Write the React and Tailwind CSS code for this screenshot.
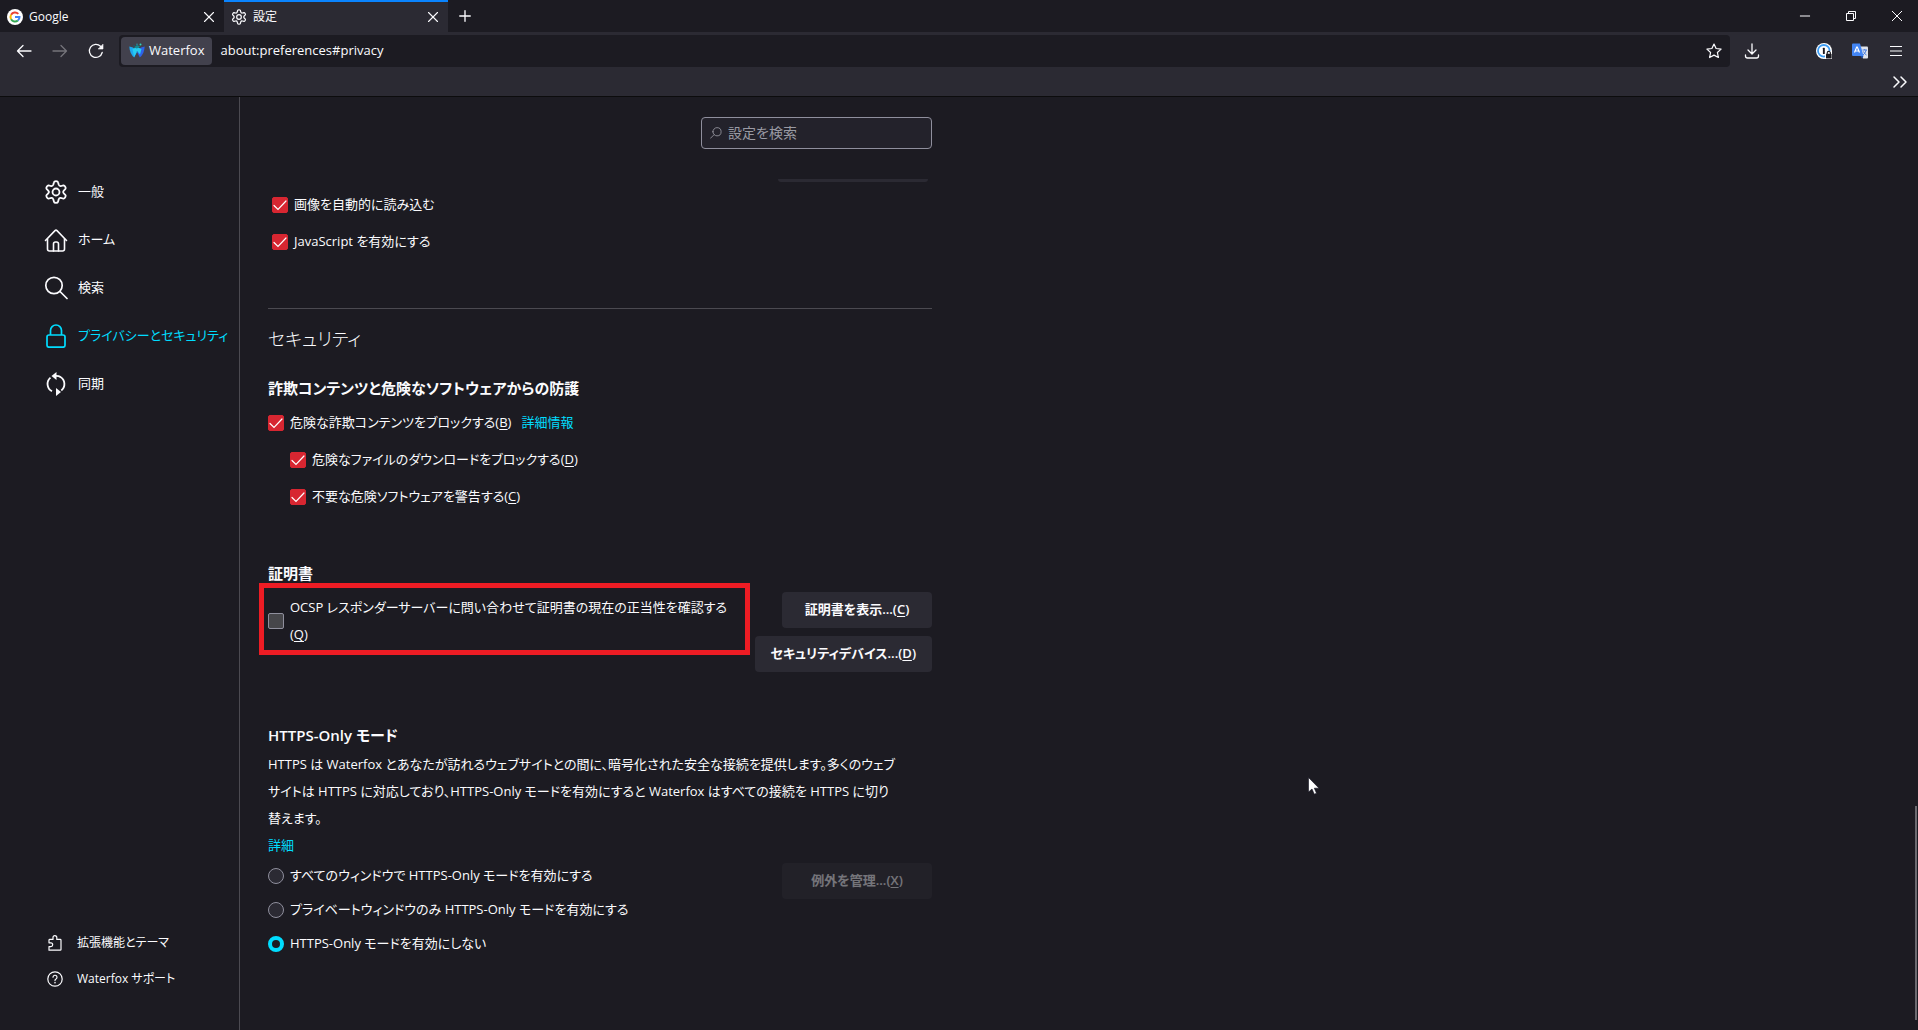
import React, { useState } from 'react';
import { ChevronsRight, Minus, Plus, X } from 'lucide-react';

function GearIcon({ className, strokeWidth = 1.500 }) {
  return (
    <svg viewBox="2 .7 20 20" className={className} fill="none" stroke="currentColor" strokeWidth={strokeWidth}>
      <path d="M10.300 2.600c.3-1.300 3.100-1.300 3.400 0l.5 1.900c.3.9 1.200 1.400 2.100 1.200l1.900-.5c1-.2 2.400 2.200 1.700 2.900l-1.400 1.400c-.7.7-.7 1.700 0 2.400l1.400 1.400c.7.7-.7 3.100-1.700 2.900l-1.900-.5c-.9-.2-1.800.3-2.100 1.200l-.5 1.900c-.3 1.300-3.100 1.300-3.400 0l-.5-1.900c-.3-.9-1.200-1.400-2.100-1.200l-1.900.5c-1 .2-2.400-2.200-1.700-2.900l1.400-1.400c.7-.7.7-1.700 0-2.400L4.100 8.100C3.400 7.400 4.800 5 5.800 5.200l1.900.5c.9.2 1.800-.3 2.100-1.200z" />
      <circle cx="12" cy="10.700" r="2.900" />
    </svg>
  );
}

function HomeIcon({ className }) {
  return (
    <svg viewBox="0 0 24 24" className={className} fill="none" stroke="currentColor" strokeWidth="1.600" strokeLinejoin="round" strokeLinecap="round">
      <path d="M1.500 12.500 11 2.600q1-1 2 0l9.500 9.900" />
      <path d="M3.500 11v10q0 2 2 2h13q2 0 2-2V11" />
      <path d="M9.500 23v-7q0-2 2-2h1q2 0 2 2v7" />
    </svg>
  );
}

function SearchIcon({ className }) {
  return (
    <svg viewBox="0 0 24 24" className={className} fill="none" stroke="currentColor" strokeWidth="1.700" strokeLinecap="round">
      <circle cx="10" cy="9.500" r="8.200" />
      <path d="m16 15.500 7 7" />
    </svg>
  );
}

function LockIcon({ className }) {
  return (
    <svg viewBox="0 0 24 24" className={className} fill="none" stroke="currentColor" strokeWidth="1.700">
      <rect x="3" y="11" width="18" height="12.200" rx="2" />
      <path d="M6.500 11V6.500a5.500 5.500 0 0 1 11 0V11" />
    </svg>
  );
}

function SyncIcon({ className }) {
  return (
    <svg viewBox="0 0 24 24" className={className} fill="none" stroke="currentColor" strokeWidth="1.800">
      <path d="M8 19.300A8.300 8.300 0 0 1 6.500 5.600" />
      <path d="M12 3.800q3 0 4.500 1.200a8.300 8.300 0 0 1 .8 13.500" />
      <path d="M12.500 0v8L7.500 4zM12 16v8l5-4z" fill="currentColor" stroke="none" />
    </svg>
  );
}

function PuzzleIcon({ className }) {
  return (
    <svg viewBox="0 0 16 16" className={className} fill="none" stroke="currentColor" strokeWidth="1.200" strokeLinejoin="round">
      <path d="M2 15.200h11.200q.8 0 .8-.8V5.200q0-.8-.8-.8H9.800V2.600a1.900 1.900 0 0 0-3.800 0v1.800H2.800q-.8 0-.8.8v2.600h1.800a1.900 1.900 0 0 1 0 3.800H2z" />
    </svg>
  );
}

function HelpIcon({ className }) {
  return (
    <svg viewBox="0 0 16 16" className={className} fill="none" stroke="currentColor" strokeWidth="1.200" strokeLinecap="round">
      <circle cx="8" cy="8" r="7.200" />
      <path d="M6 6.200a2 2 0 1 1 3 1.800q-1 .5-1 1.400" />
      <circle cx="8" cy="11.600" r=".3" />
    </svg>
  );
}

function GoogleLogo({ className }) {
  return (
    <svg viewBox="0 0 16 16" className={className} fill="none" strokeWidth="2">
      <circle cx="8" cy="8" r="8" fill="#fff" />
      <path d="M4.100 5.700A4.500 4.500 0 0 1 11.300 4.900" stroke="#ea4335" />
      <path d="M4.100 5.700a4.500 4.500 0 0 0 0 4.600" stroke="#fbbc05" />
      <path d="M4.100 10.300a4.500 4.500 0 0 0 6.800 1.200" stroke="#34a853" />
      <path d="M10.900 11.500A4.500 4.500 0 0 0 12.500 8H8" stroke="#4285f4" />
    </svg>
  );
}

function WaterfoxLogo({ className }) {
  return (
    <svg viewBox="0 0 16 16" className={className}>
      <path d="M.3 3.500 4 4.500 8 9l-2.800 5.500Q.8 11 .3 3.500z" fill="#1ea7f0" />
      <path d="M15.700 3.500 12 4.500 8 9l2.800 5.500q4.400-3.500 4.900-11z" fill="#2f62e8" />
      <path d="M3.500 6 8 4l4.500 2-1.500 5.500-3-3.500-2.800 6z" fill="#27cdf2" />
      <path d="M5 4.500 8 2l3 1.500-3 2z" fill="#128a94" />
      <circle cx="11.500" cy="1.500" r="1" fill="#2dd4bf" />
      <circle cx="8" cy="1.200" r=".7" fill="#22a6b3" />
      <circle cx="5" cy="2.700" r=".8" fill="#155e75" />
    </svg>
  );
}

function PasswordIcon({ className }) {
  return (
    <svg viewBox="0 0 16 16" className={className}>
      <circle cx="8" cy="8" r="8" fill="#fff" />
      <circle cx="7.800" cy="7.800" r="5.800" fill="#fff" stroke="#3d9df5" strokeWidth="1.800" />
      <rect x="6.900" y="4.700" width="1.900" height="6.300" rx=".6" fill="#1c1b22" />
      <path d="M9 8h7v8H9z" fill="#fff" />
      <rect x="10" y="10.800" width="5.600" height="4.700" rx=".6" fill="#1c1b22" />
      <path d="M11.200 11v-1a1.600 1.600 0 0 1 3.200 0v1" fill="none" stroke="#1c1b22" strokeWidth="1.100" />
    </svg>
  );
}

function TranslateIcon({ className }) {
  return (
    <svg viewBox="0 0 16 16" className={className}>
      <path d="M7 3.500h8q1 0 1 1v10q0 1-1 1H11z" fill="#dfe3ea" />
      <path d="M10.500 7H15M12.700 6v1M14.200 7q-.5 3-3.200 5M11.500 8.500q1 2.500 3 3.500" stroke="#4a7fe0" fill="none" />
      <path d="M1 .5h7L11.500 13H1q-1 0-1-1V1.500q0-1 1-1z" fill="#4285f4" />
      <path d="M8.500 13h3L10 15.500z" fill="#1b4fae" />
      <path d="M2.500 9.500 4.700 4h.6l2.200 5.500M3.300 8h3.400" stroke="#fff" strokeWidth="1.200" fill="none" />
    </svg>
  );
}

const categories = [
  { name: '一般', Icon: GearIcon },
  { name: 'ホーム', Icon: HomeIcon },
  { name: '検索', Icon: SearchIcon },
  { name: 'プライバシーとセキュリティ', Icon: LockIcon, active: true },
  { name: '同期', Icon: SyncIcon },
];

const httpsModes = [
  { id: 'all', label: 'すべてのウィンドウで HTTPS-Only モードを有効にする' },
  { id: 'private', label: 'プライベートウィンドウのみ HTTPS-Only モードを有効にする' },
  { id: 'off', label: 'HTTPS-Only モードを有効にしない' },
];

function Tab({ icon, title, active }) {
  return (
    <div
      className={`flex w-56 items-center border-t-2 pr-[6px] pl-[7px] text-xs ${
        active ? 'border-[#0a84ff] bg-[#2b2a33]' : 'border-transparent'
      }`}
    >
      {icon}
      <span className="ml-[6px] flex-1 whitespace-nowrap">{title}</span>
      <button aria-label="タブを閉じる">
        <X className="size-[18px]" strokeWidth={1.500} />
      </button>
    </div>
  );
}

function TitleBar() {
  return (
    <div className="flex h-8">
      <Tab icon={<GoogleLogo className="size-4" />} title="Google" />
      <Tab icon={<GearIcon className="size-4" strokeWidth={1.500} />} title="設定" active />
      <button className="ml-1 px-1" aria-label="新しいタブ">
        <Plus className="size-[18px]" strokeWidth={1.800} />
      </button>
      <div className="ml-auto flex gap-1">
        <button className="flex w-[42px] items-center justify-center" aria-label="最小化">
          <Minus className="size-4" strokeWidth={1.500} />
        </button>
        <button className="flex w-[42px] items-center justify-center" aria-label="元に戻す">
          <svg viewBox="0 0 10 10" className="size-[10px]" fill="none" stroke="currentColor">
            <path d="M.5 2.500h7v7h-7zM2.500 2.500v-2h7v7h-2" />
          </svg>
        </button>
        <button className="flex w-[42px] items-center justify-center" aria-label="閉じる">
          <svg viewBox="0 0 10 10" className="size-[10px]" stroke="currentColor">
            <path d="m0 0 10 10M10 0 0 10" />
          </svg>
        </button>
      </div>
    </div>
  );
}

function NavBar() {
  return (
    <div className="flex h-9 items-center pt-px">
      <div className="flex items-center gap-5 pr-[15px] pl-4">
        <button aria-label="戻る">
          <svg viewBox="0 0 16 16" className="size-4" fill="none" stroke="currentColor" strokeWidth="1.300" strokeLinecap="round" strokeLinejoin="round">
            <path d="M15 8H1.500M7 2.500 1.500 8 7 13.500" />
          </svg>
        </button>
        <button aria-label="進む" className="text-[#75747b]" disabled>
          <svg viewBox="0 0 16 16" className="size-4" fill="none" stroke="currentColor" strokeWidth="1.300" strokeLinecap="round" strokeLinejoin="round">
            <path d="M1 8h13.500M9 2.500 14.500 8 9 13.500" />
          </svg>
        </button>
        <button aria-label="再読み込み">
          <svg viewBox="0 0 16 16" className="size-4" fill="none" stroke="currentColor" strokeWidth="1.300" strokeLinecap="round">
            <path d="M14.200 9.500A6.500 6.500 0 1 1 12.500 3.300L14 5" />
            <path d="M15 1.500V6h-4.500z" fill="currentColor" strokeWidth=".6" />
          </svg>
        </button>
      </div>
      <div className="flex h-8 flex-1 items-center rounded bg-[#1c1b22] p-[2px]">
        <button className="flex h-7 items-center gap-1 rounded-sm bg-[#42414d] px-2 text-[13px]">
          <WaterfoxLogo className="size-4" />
          Waterfox
        </button>
        <input
          className="ml-2 flex-1 bg-transparent text-[13px] outline-none"
          aria-label="アドレスバー"
          defaultValue="about:preferences#privacy"
        />
        <button className="px-[6px]" aria-label="ブックマークに追加">
          <svg viewBox="0 0 16 16" className="size-4" fill="none" stroke="currentColor" strokeWidth="1.200" strokeLinejoin="round">
            <path d="m8 1 2.100 4.500 5 .6-3.700 3.400 1 5L8 12.100l-4.400 2.400 1-5L.9 6.100l5-.6z" />
          </svg>
        </button>
      </div>
      <div className="flex items-center gap-5 px-[14px]">
        <button className="mr-9" aria-label="ダウンロード">
          <svg viewBox="0 0 16 16" className="size-4" fill="none" stroke="currentColor" strokeWidth="1.300" strokeLinecap="round" strokeLinejoin="round">
            <path d="M8 1v9.500M4 7l4 4 4-4M1.500 12v1q0 2 2 2h9q2 0 2-2v-1" />
          </svg>
        </button>
        <button aria-label="パスワード">
          <PasswordIcon className="size-4" />
        </button>
        <button aria-label="翻訳">
          <TranslateIcon className="size-4" />
        </button>
        <button aria-label="メニュー">
          <svg viewBox="0 0 16 16" className="size-4" stroke="currentColor" strokeWidth="1.200">
            <path d="M2 3.500h12M2 8h12M2 12.500h12" />
          </svg>
        </button>
      </div>
    </div>
  );
}

function Checkbox({ label, hotkey, link, defaultChecked = true }) {
  return (
    <div className="flex items-center gap-[10px] leading-[27px]">
      <label className="flex items-center gap-[6px]">
        <span className="grid size-4 shrink-0">
          <input
            type="checkbox"
            defaultChecked={defaultChecked}
            className="peer col-start-1 row-start-1 size-4 appearance-none rounded-xs border border-[#8f8f9d] bg-[#46464a] checked:border-[#d72631] checked:bg-[#d72631]"
          />
          <svg
            viewBox="0 0 16 16"
            className="pointer-events-none invisible col-start-1 row-start-1 size-4 peer-checked:visible"
            fill="none"
            stroke="#fff"
            strokeWidth="1.200"
            strokeLinecap="round"
          >
            <path d="m2 8.500 4 4 8-8.500" />
          </svg>
        </span>
        <span>
          {label}
          {hotkey && <>(<u className="underline-offset-2">{hotkey}</u>)</>}
        </span>
      </label>
      {link && (
        <a href="#details" className="text-[#00ddff]">
          {link}
        </a>
      )}
    </div>
  );
}

function ActionButton({ label, hotkey, disabled }) {
  return (
    <button
      disabled={disabled}
      className="h-9 min-w-[150px] rounded bg-[#2b2a33] px-4 font-semibold whitespace-nowrap disabled:opacity-40"
    >
      {label}...(<u className="underline-offset-2">{hotkey}</u>)
    </button>
  );
}

function Sidebar() {
  return (
    <nav className="flex w-60 shrink-0 flex-col border-r border-[#4b4a51] pt-[71px] pb-[33px]">
      {categories.map(({ name, Icon, active }) => (
        <a
          key={name}
          href="#category"
          className={`flex h-12 items-center gap-[10px] pl-11 whitespace-nowrap ${active ? 'text-[#00ddff]' : ''}`}
        >
          <Icon className="size-6 shrink-0" />
          {name}
        </a>
      ))}
      <div className="mt-auto text-xs">
        <a href="#addons" className="flex h-9 items-center gap-[14px] pl-[47px]">
          <PuzzleIcon className="size-4" />
          拡張機能とテーマ
        </a>
        <a href="#support" className="flex h-9 items-center gap-[14px] pl-[47px]">
          <HelpIcon className="size-4" />
          Waterfox サポート
        </a>
      </div>
    </nav>
  );
}

export default function App() {
  const [mode, setMode] = useState('off');

  return (
    <div className="relative flex min-h-screen flex-col bg-[#1c1b22] font-['Open_Sans','Noto_Sans_CJK_JP',sans-serif] text-[13px] text-[#fbfbfe] [font-feature-settings:'palt']">
      <header>
        <TitleBar />
        <div className="border-b border-[#0c0c0d] bg-[#2b2a33]">
          <NavBar />
          <div className="flex h-7 items-center justify-end px-[6px]">
            <button aria-label="その他のブックマーク">
              <ChevronsRight className="size-6" strokeWidth={1.500} />
            </button>
          </div>
        </div>
      </header>

      <div className="flex flex-1">
        <Sidebar />
        <main className="max-w-[692px] flex-1 pt-5 pl-7">
          <div className="ml-auto flex h-8 w-[231px] items-center gap-[6px] rounded border border-[#8f8f9d] bg-[#23222b] px-2 text-[#9a9aa3]">
            <SearchIcon className="size-3 -scale-x-100" />
            <input
              type="search"
              aria-label="設定を検索"
              placeholder="設定を検索"
              className="min-w-0 flex-1 bg-transparent text-sm outline-none placeholder:text-[#9a9aa3]"
            />
          </div>
          <div className="mt-[30px] mr-1 ml-auto h-[3px] w-[150px] rounded-b bg-[#2b2a33]" />

          <div className="mt-[9px] flex flex-col gap-[10px] pl-1">
            <Checkbox label="画像を自動的に読み込む" />
            <Checkbox label="JavaScript を有効にする" />
          </div>

          <hr className="mt-[53px] border-[#4b4a51]" />

          <h1 className="mt-[14px] text-lg leading-8 font-light">セキュリティ</h1>

          <section className="mt-5">
            <h2 className="text-[15px] leading-[27px] font-semibold">詐欺コンテンツと危険なソフトウェアからの防護</h2>
            <div className="mt-[7px] flex flex-col gap-[10px]">
              <Checkbox label="危険な詐欺コンテンツをブロックする" hotkey="B" link="詳細情報" />
              <div className="flex flex-col gap-[10px] pl-[22px]">
                <Checkbox label="危険なファイルのダウンロードをブロックする" hotkey="D" />
                <Checkbox label="不要な危険ソフトウェアを警告する" hotkey="C" />
              </div>
            </div>
          </section>

          <section className="mt-[50px]">
            <h2 className="text-[15px] leading-[27px] font-semibold">証明書</h2>
            <div className="flex items-start justify-between">
              <div className="relative mt-[7px] w-[473px] shrink-0">
                <Checkbox
                  label="OCSP レスポンダーサーバーに問い合わせて証明書の現在の正当性を確認する"
                  hotkey="Q"
                  defaultChecked={false}
                />
                <div className="pointer-events-none absolute -inset-x-[9px] -top-[11px] -bottom-[7px] border-5 border-[#ed1c24]" />
              </div>
              <div className="mt-[5px] flex flex-col items-end gap-2">
                <ActionButton label="証明書を表示" hotkey="C" />
                <ActionButton label="セキュリティデバイス" hotkey="D" />
              </div>
            </div>
          </section>

          <section className="mt-[50px]">
            <h2 className="text-[15px] leading-[27px] font-semibold">HTTPS-Only モード</h2>
            <p className="mt-[2px] leading-[27px]">
              HTTPS は Waterfox とあなたが訪れるウェブサイトとの間に、暗号化された安全な接続を提供します。多くのウェブ
              <br />
              サイトは HTTPS に対応しており、HTTPS-Only モードを有効にすると Waterfox はすべての接続を HTTPS に切り
              <br />
              替えます。
            </p>
            <a href="#https-only" className="block leading-[27px] text-[#00ddff]">
              詳細
            </a>
            <div className="flex items-start justify-between">
              <div className="flex flex-col">
                {httpsModes.map(({ id, label }) => (
                  <label key={id} className="flex h-[34px] items-center gap-[6px]">
                    <input
                      type="radio"
                      name="https-mode"
                      checked={mode === id}
                      onChange={() => setMode(id)}
                      className="size-4 appearance-none rounded-full border border-[#8f8f9d] bg-[#2b2a33] checked:border-4 checked:border-[#00ddff] checked:bg-[#1c1b22]"
                    />
                    {label}
                  </label>
                ))}
              </div>
              <div className="pt-1">
                <ActionButton label="例外を管理" hotkey="X" disabled />
              </div>
            </div>
          </section>
        </main>
      </div>

      <div className="absolute right-px bottom-[10px] h-[214px] w-[2px] bg-[#6b6a70]" />
      <svg viewBox="0 0 12 18" className="absolute top-[777px] left-[1308px] h-[18px] w-3">
        <path d="M.5.5v14.500l3.500-3 2.300 5.200 2.200-1-2.200-5h4.700z" fill="#fff" stroke="#101020" strokeWidth=".6" />
      </svg>
    </div>
  );
}
